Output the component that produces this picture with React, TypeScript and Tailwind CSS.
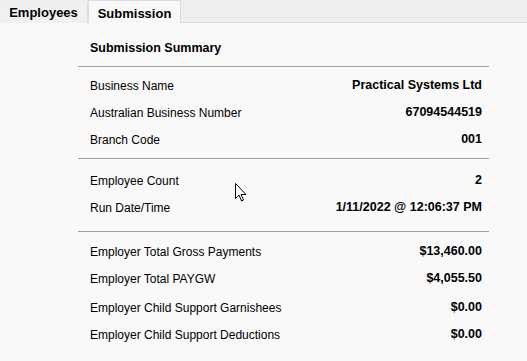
import React from "react";

const font = { fontFamily: '"Liberation Sans", Arial, sans-serif' };

function Row({ label, value, className = "" }: { label: string; value: string; className?: string }) {
  return (
    <div className={`flex items-center justify-between h-[27px] pl-[12px] pr-[7px] text-[12px] text-black ${className}`}>
      <span>{label}</span>
      <span className="font-bold text-[12.5px]">{value}</span>
    </div>
  );
}

export default function App() {
  return (
    <div className="relative w-[527px] h-[361px] bg-[#f9f9f9] overflow-hidden" style={font}>
      <div className="flex h-[23px] bg-[#eeeeee] border-b border-[#dcdcdc]">
        <div className="mt-[2px] w-[88px] h-[21px] flex items-center justify-center border-r border-[#dcdcdc] bg-[#f0f0f0] text-[13px] font-bold text-black">
          Employees
        </div>
        <div className="relative -mb-px w-[93px] h-[23px] flex items-start justify-center pt-[3px] bg-[#f9f9f9] border-x border-t border-[#dcdcdc] text-[13px] font-bold text-black">
          Submission
        </div>
      </div>
      <div className="ml-[78px] w-[411px]">
        <div className="h-[43px] pl-[12px] pt-[18px] text-[12.5px] font-bold text-black leading-[15px]">
          Submission Summary
        </div>
        <div className="h-px bg-[#a0a0a0]" />
        <div className="pt-[5px] pb-[5px]">
          <Row label="Business Name" value="Practical Systems Ltd" />
          <Row label="Australian Business Number" value="67094544519" />
          <Row label="Branch Code" value="001" />
        </div>
        <div className="h-px bg-[#a0a0a0]" />
        <div className="pt-[8px] pb-[10px]">
          <Row label="Employee Count" value="2" />
          <Row label="Run Date/Time" value="1/11/2022 @ 12:06:37 PM" />
        </div>
        <div className="h-px bg-[#a0a0a0]" />
        <div className="pt-[6px]">
          <Row label="Employer Total Gross Payments" value="$13,460.00" />
          <Row label="Employer Total PAYGW" value="$4,055.50" />
          <Row label="Employer Child Support Garnishees" value="$0.00" className="mt-[2px]" />
          <Row label="Employer Child Support Deductions" value="$0.00" />
        </div>
      </div>
      <svg className="absolute left-[235px] top-[183px]" width="13" height="20" viewBox="0 0 13 20">
        <path d="M0.5 0.5 L0.5 15.5 L4 12 L6.5 18 L8.5 17 L6 11.5 L11 11.5 Z" fill="#fff" stroke="#000" strokeWidth="1" strokeLinejoin="miter" />
      </svg>
    </div>
  );
}
